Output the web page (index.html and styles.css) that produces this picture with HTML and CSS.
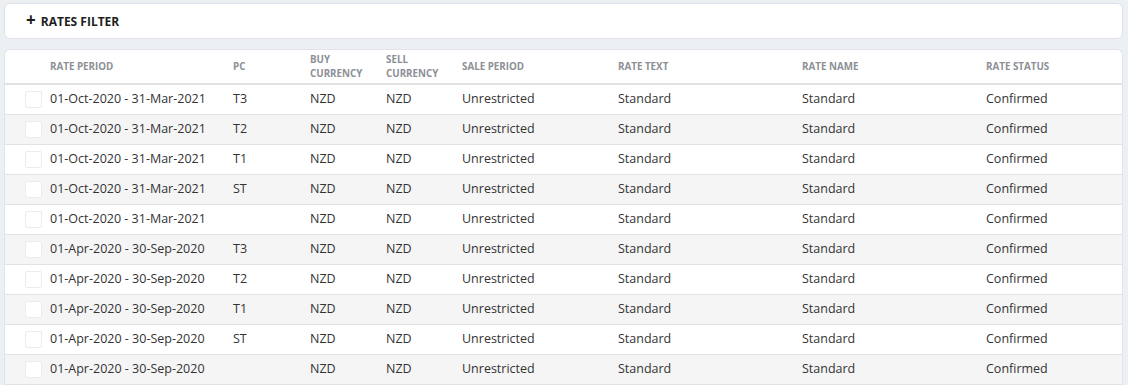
FILE: index.html
```html
<!DOCTYPE html>
<html lang="en">
<head>
    <meta charset="UTF-8">
    <title>Rates</title>
    <link rel="stylesheet" href="styles.css">
</head>
<body>
<div class="page">
    <div class="filter-card">
        <button class="filter-btn"><span class="plus">+</span> RATES FILTER</button>
    </div>

    <div class="table-card">
        <table class="rates">
            <colgroup>
                <col class="c-check">
                <col class="c-period">
                <col class="c-pc">
                <col class="c-buy">
                <col class="c-sell">
                <col class="c-sale">
                <col class="c-text">
                <col class="c-name">
                <col class="c-status">
            </colgroup>
            <thead>
            <tr>
                <th></th>
                <th>Rate Period</th>
                <th>PC</th>
                <th>Buy<br>Currency</th>
                <th>Sell<br>Currency</th>
                <th>Sale Period</th>
                <th>Rate Text</th>
                <th>Rate Name</th>
                <th>Rate Status</th>
            </tr>
            </thead>
            <tbody id="rows"></tbody>
        </table>
    </div>
</div>
<script>
    const periods = ['01-Oct-2020 - 31-Mar-2021', '01-Apr-2020 - 30-Sep-2020'];
    const codes = ['T3', 'T2', 'T1', 'ST', ''];

    window.onload = () => {
        const tbody = document.getElementById('rows');
        periods.forEach(period => {
            codes.forEach(pc => {
                const tr = document.createElement('tr');
                const cells = [period, pc, 'NZD', 'NZD', 'Unrestricted', 'Standard', 'Standard', 'Confirmed'];
                tr.innerHTML = '<td><span class="check"></span></td>' +
                    cells.map(c => '<td>' + c + '</td>').join('');
                tbody.appendChild(tr);
            });
        });
    };
</script>
</body>
</html>
```

FILE: styles.css
```css
* {
    font-family: 'Open Sans', sans-serif;
    box-sizing: border-box;
}
body {
    margin: 0;
    background: #edf0f2;
}
.page {
    padding: 3px 5px 0 4px;
}
.filter-card {
    height: 36px;
    background: #fff;
    border: 1px solid #dfdfee;
    border-radius: 6px;
    display: flex;
    align-items: center;
    padding-left: 21px;
}
.filter-btn {
    border: none;
    background: none;
    padding: 0;
    font-size: 12px;
    font-weight: 700;
    color: #1e1e1e;
    display: flex;
    align-items: center;
    gap: 5px;
}
.plus {
    font-size: 17px;
    font-weight: 700;
    line-height: 1;
    margin-top: -3px;
}
.table-card {
    margin-top: 10px;
    background: #fff;
    border: 1px solid #e3e3ec;
    border-bottom: none;
    border-radius: 6px 6px 0 0;
    overflow: hidden;
}
.rates {
    width: 100%;
    border-collapse: collapse;
    table-layout: fixed;
}
.c-check { width: 45px; }
.c-period { width: 183px; }
.c-pc { width: 77px; }
.c-buy { width: 76px; }
.c-sell { width: 76px; }
.c-sale { width: 156px; }
.c-text { width: 184px; }
.c-name { width: 184px; }
.c-status { width: 136px; }

.rates th {
    height: 34px;
    text-align: left;
    vertical-align: middle;
    font-size: 9.8px;
    font-weight: 700;
    line-height: 14px;
    color: #8c9096;
    text-transform: uppercase;
    padding: 0 6px 0 0;
    border-bottom: 2px solid #e2e2e2;
}
.rates td {
    height: 30px;
    font-size: 12.5px;
    color: #333;
    padding: 0 6px 1px 0;
    border-bottom: 1px solid #e2e2e2;
    white-space: nowrap;
}
.rates tbody tr:nth-child(even) td {
    background: #f5f5f5;
}
.check {
    display: block;
    width: 17px;
    height: 17px;
    margin-left: 20px;
    margin-top: 1px;
    background: #fff;
    border: 1px solid #ececec;
    border-radius: 2px;
}
```
